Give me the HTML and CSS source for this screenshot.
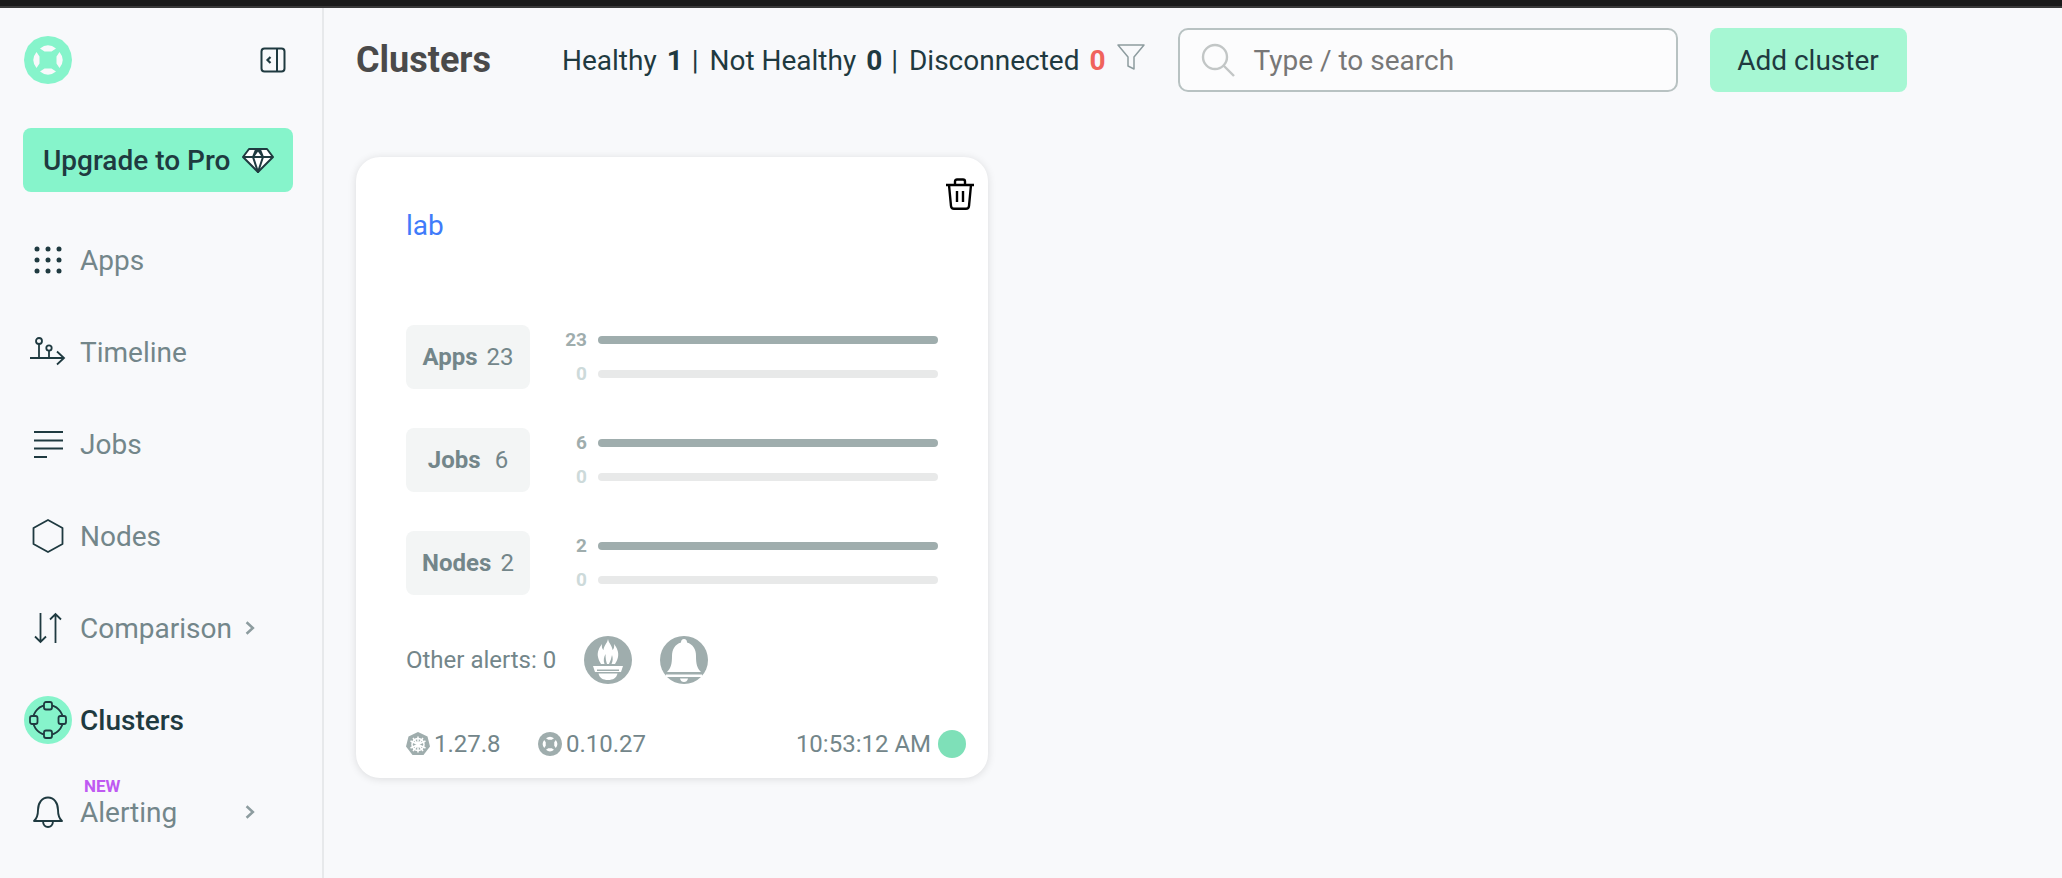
FILE: index.html
```html
<!DOCTYPE html>
<html lang="en">
<head>
  <meta charset="UTF-8">
  <title>Clusters</title>
  <link rel="stylesheet" href="styles.css">
</head>
<body>
  <div class="topbar"></div>
  <div class="layout">
    <aside class="sidebar">
      <div class="brand">
        <svg class="logo" viewBox="0 0 48 48"><path fill-rule="evenodd" fill="#86f4cb" d="M17 1L24 0L31 1L38 4L44 10L47 17L48 24L47 31L44 38L38 44L31 47L24 48L17 47L10 44L4 38L1 31L0 24L1 17L4 10L10 4ZM16 12.500Q24 6 32 12.500L27.500 15.500H20.500ZM35.500 16Q42 24 35.500 32L32.500 27.500V20.500ZM32 35.500Q24 42 16 35.500L20.500 32.500H27.500ZM12.500 32Q6 24 12.500 16L15.500 20.500V27.500Z"/></svg>
        <svg class="collapse" viewBox="0 0 26 26" fill="none" stroke="#1f3a40" stroke-width="2"><rect x="1.500" y="1.500" width="23" height="23" rx="3"/><path d="M17 1.500V24.500"/><path d="M10.500 10L7.500 13L10.500 16" stroke-width="2.200"/></svg>
      </div>
      <a class="upgrade" href="#">Upgrade to Pro
        <svg viewBox="0 0 32 26" fill="#fff" stroke="#1f3a40" stroke-width="2" stroke-linejoin="round"><path d="M7 2H25L31 10L16 25L1 10Z"/><path d="M1 10H31M11 10L16 25L21 10M11 10L14 2.500M21 10L18 2.500M11 10L16 3L21 10" fill="none"/></svg>
      </a>
      <nav class="menu">
        <a class="menu-item" href="#">
          <span class="menu-icon"><svg viewBox="0 0 28 28" fill="#1f3a40"><circle cx="3" cy="3" r="2.500"/><circle cx="14" cy="3" r="2.500"/><circle cx="25" cy="3" r="2.500"/><circle cx="3" cy="14" r="2.500"/><circle cx="14" cy="14" r="2.500"/><circle cx="25" cy="14" r="2.500"/><circle cx="3" cy="25" r="2.500"/><circle cx="14" cy="25" r="2.500"/><circle cx="25" cy="25" r="2.500"/></svg></span>
          Apps
        </a>
        <a class="menu-item" href="#">
          <span class="menu-icon"><svg viewBox="0 0 36 30" fill="none" stroke="#1f3a40" stroke-width="1.800"><path d="M0 21H34M27 14.500L34 21L27 27.500"/><circle cx="9" cy="4" r="3"/><path d="M9 7V21"/><circle cx="19" cy="11" r="2.700"/><path d="M19 14V21"/></svg></span>
          Timeline
        </a>
        <a class="menu-item" href="#">
          <span class="menu-icon"><svg viewBox="0 0 30 28" fill="none" stroke="#1f3a40" stroke-width="2"><path d="M1 2H30M1 10.500H30M1 18.500H30M1 27H14"/></svg></span>
          Jobs
        </a>
        <a class="menu-item" href="#">
          <span class="menu-icon"><svg viewBox="0 0 32 34" fill="none" stroke="#1f3a40" stroke-width="1.800" stroke-linejoin="round"><path d="M16 1L30.500 9V25L16 33L1.500 25V9Z"/></svg></span>
          Nodes
        </a>
        <a class="menu-item" href="#">
          <span class="menu-icon"><svg viewBox="0 0 28 32" fill="none" stroke="#1f3a40" stroke-width="1.800"><path d="M6.500 1V30M1 24.500L6.500 30L12 24.500M21.500 31V2M16 7.500L21.500 2L27 7.500"/></svg></span>
          Comparison
          <svg class="chevron" viewBox="0 0 10 14" fill="none" stroke="#8d9c9f" stroke-width="2.200"><path d="M2 2L7.500 7L2 12"/></svg>
        </a>
        <a class="menu-item active" href="#">
          <span class="menu-icon"><svg viewBox="0 0 38 38" fill="#86f4cb" stroke="#1f3a40" stroke-width="1.800"><circle cx="19" cy="19" r="15" fill="none"/><rect x="15" y="1" width="8" height="7.500" rx="2"/><rect x="15" y="29.500" width="8" height="7.500" rx="2"/><rect x="1" y="15" width="7.500" height="8" rx="2"/><rect x="29.500" y="15" width="7.500" height="8" rx="2"/></svg></span>
          Clusters
        </a>
        <a class="menu-item" href="#">
          <span class="menu-icon"><svg viewBox="0 0 30 32" fill="none" stroke="#1f3a40" stroke-width="1.900" stroke-linejoin="round"><path d="M1 25H29C25.500 22 25 19 25 14C25 7 21 1.500 15 1.500C9 1.500 5 7 5 14C5 19 4.500 22 1 25Z"/><path d="M10 25C10 33 20 33 20 25"/></svg></span>
          <span class="new-label">Alerting<span class="new-tag">NEW</span></span>
          <svg class="chevron chevron-alert" viewBox="0 0 10 14" fill="none" stroke="#8d9c9f" stroke-width="2.200"><path d="M2 2L7.500 7L2 12"/></svg>
        </a>
      </nav>
    </aside>

    <main class="content">
      <header class="page-head">
        <h1>Clusters</h1>
        <div class="summary">
          Healthy <b>1</b> <i>|</i> Not Healthy <b>0</b> <i>|</i> Disconnected <b class="red">0</b>
        </div>
        <svg class="filter" viewBox="0 0 28 26" fill="none" stroke="#8d9c9f" stroke-width="1.500" stroke-linejoin="round"><path d="M1 1H27L17 13V25L11 22V13Z"/></svg>
        <div class="search">
          <svg viewBox="0 0 34 34" fill="none" stroke="#c2c6c6" stroke-width="2.400"><circle cx="14" cy="14" r="12"/><path d="M22.500 22.500L33 33"/></svg>
          <span>Type / to search</span>
        </div>
        <button class="add-btn" type="button">Add cluster</button>
      </header>

      <section class="card">
        <svg class="trash" viewBox="0 0 30 32" fill="none" stroke="#000" stroke-width="2.400" stroke-linejoin="round"><path d="M1 7H29M10 7V3.500C10 2 11 1.500 12 1.500H18C19 1.500 20 2 20 3.500V7M4 7L6 28C6.200 30 7 30.800 9 30.800H21C23 30.800 23.800 30 24 28L26 7M12 13V24M18 13V24"/></svg>
        <a class="card-name" href="#">lab</a>

        <div class="stat">
          <div class="stat-box"><b>Apps</b> 23</div>
          <div class="stat-bars">
            <div class="bar-row"><span>23</span><div class="bar"></div></div>
            <div class="bar-row empty"><span>0</span><div class="bar"></div></div>
          </div>
        </div>
        <div class="stat">
          <div class="stat-box stat-box-wide"><b>Jobs</b> 6</div>
          <div class="stat-bars">
            <div class="bar-row"><span>6</span><div class="bar"></div></div>
            <div class="bar-row empty"><span>0</span><div class="bar"></div></div>
          </div>
        </div>
        <div class="stat">
          <div class="stat-box"><b>Nodes</b> 2</div>
          <div class="stat-bars">
            <div class="bar-row"><span>2</span><div class="bar"></div></div>
            <div class="bar-row empty"><span>0</span><div class="bar"></div></div>
          </div>
        </div>

        <div class="alerts">
          <span>Other alerts: 0</span>
          <svg viewBox="0 0 48 48"><circle cx="24" cy="24" r="24" fill="#9fadad"/><path fill="#fff" d="M24 3C25 8 28 9 28.500 14C30 13 30.500 10 30 8C33 12 35 16 34 21C33.500 24 32 26 31 28H17C16 26 14.500 24 14 21C13 16 15 12 18 8C17.500 10 18 13 19.500 14C20 9 23 8 24 3Z"/><path fill="#9fadad" d="M20.500 28C19 24 20 21 21.500 18C21.500 22 22 25 23 28ZM27.500 28C29 25 29 22 28 19C27.500 22 26.500 25 25 28Z"/><path fill="#fff" d="M9 30H39L37 36H11ZM14.500 37.500H33.500C32.500 42 29 44 24 44C19 44 15.500 42 14.500 37.500Z"/><path fill="#9fadad" d="M13 33.500H35V35H13Z"/></svg>
          <svg viewBox="0 0 48 48"><circle cx="24" cy="24" r="24" fill="#9fadad"/><path fill="#fff" d="M24 3C26 3 27 4.500 27 6.500C33 8.500 36 13 36 20C36 28 37 32 41 36H7C11 32 12 28 12 20C12 13 15 8.500 21 6.500C21 4.500 22 3 24 3ZM6 38.500H42V41H6ZM20 42.500H28C27.500 45 26 46 24 46C22 46 20.500 45 20 42.500Z"/></svg>
        </div>

        <div class="card-foot">
          <span class="version">
            <svg viewBox="0 0 24 24"><path fill="#9fadad" d="M12 0L21.500 4.500L24 14.500L17.500 23H6.500L0 14.500L2.500 4.500Z"/><g fill="none" stroke="#fff" stroke-width="1.500"><circle cx="12" cy="12.500" r="6"/><path d="M12 4.500V20.500M4.500 9L19.500 16M19.500 9L4.500 16M7 19L17 6M17 19L7 6"/></g></svg>
            1.27.8
          </span>
          <span class="version">
            <svg viewBox="0 0 48 48"><path fill-rule="evenodd" fill="#9fadad" d="M17 1L24 0L31 1L38 4L44 10L47 17L48 24L47 31L44 38L38 44L31 47L24 48L17 47L10 44L4 38L1 31L0 24L1 17L4 10L10 4ZM16 12.500Q24 6 32 12.500L27.500 15.500H20.500ZM35.500 16Q42 24 35.500 32L32.500 27.500V20.500ZM32 35.500Q24 42 16 35.500L20.500 32.500H27.500ZM12.500 32Q6 24 12.500 16L15.500 20.500V27.500Z"/></svg>
            0.10.27
          </span>
          <span class="time">10:53:12 AM</span>
          <span class="dot"></span>
        </div>
      </section>
    </main>
  </div>
</body>
</html>
```

FILE: styles.css
```css
* {
  box-sizing: border-box;
  margin: 0;
  padding: 0;
  font-family: 'Roboto', sans-serif;
}
body {
  background: #f8f9fb;
  height: 878px;
  overflow: hidden;
  color: #1f3a40;
}
a {
  text-decoration: none;
  color: inherit;
}
.topbar {
  height: 8px;
  background: #1b1b1b;
  border-bottom: 2px solid #3a3a3a;
}
.layout {
  display: flex;
  height: 870px;
}
.sidebar {
  width: 324px;
  flex-shrink: 0;
  border-right: 2px solid #e7e9eb;
  padding: 28px 0 0 23px;
}
.brand {
  display: flex;
  align-items: center;
  justify-content: space-between;
  width: 263px;
  padding-left: 1px;
  height: 48px;
}
.logo {
  width: 48px;
  height: 48px;
}
.collapse {
  width: 26px;
  height: 26px;
}
.upgrade {
  display: flex;
  align-items: center;
  gap: 12px;
  width: 270px;
  height: 64px;
  margin-top: 44px;
  padding-left: 20px;
  background: #86f4cb;
  border-radius: 8px;
  font-size: 28px;
  font-weight: 500;
}
.upgrade svg {
  width: 32px;
  height: 26px;
}
.menu {
  display: flex;
  flex-direction: column;
  margin-top: 22px;
}
.menu-item {
  display: flex;
  align-items: center;
  height: 92px;
  font-size: 28px;
  color: #73868a;
}
.menu-icon {
  width: 56px;
  height: 48px;
  flex-shrink: 0;
  margin-left: 1px;
  display: flex;
  align-items: center;
}
.menu-item:nth-child(1) .menu-icon svg { width: 28px; height: 28px; margin-left: 10px; }
.menu-item:nth-child(2) .menu-icon svg { width: 36px; height: 30px; margin-left: 6px; }
.menu-item:nth-child(3) .menu-icon svg { width: 30px; height: 28px; margin-left: 9px; }
.menu-item:nth-child(4) .menu-icon svg { width: 32px; height: 34px; margin-left: 8px; }
.menu-item:nth-child(5) .menu-icon svg { width: 28px; height: 32px; margin-left: 10px; }
.menu-item:nth-child(7) .menu-icon svg { width: 30px; height: 32px; margin-left: 9px; }
.menu-item.active {
  color: #1f3a40;
  font-weight: 500;
}
.menu-item.active .menu-icon {
  width: 48px;
  margin-right: 8px;
  justify-content: center;
  background: #86f4cb;
  border-radius: 50%;
}
.menu-item.active .menu-icon svg {
  width: 38px;
  height: 38px;
}
.chevron {
  width: 12px;
  height: 16px;
  margin-left: 12px;
}
.chevron-alert {
  margin-left: 67px;
}
.new-label {
  position: relative;
}
.new-tag {
  position: absolute;
  left: 4px;
  top: -20px;
  font-size: 17px;
  font-weight: 700;
  color: #bf5af2;
}
.content {
  flex: 1;
  padding: 20px 0 0 32px;
}
.page-head {
  display: flex;
  align-items: center;
  height: 64px;
}
h1 {
  width: 206px;
  font-size: 36px;
  font-weight: 700;
  color: #4a4a4a;
}
.summary {
  font-size: 28px;
}
.summary b {
  font-weight: 700;
  margin: 0 3px;
}
.summary i {
  font-style: normal;
  margin: 0 4px 0 -1px;
}
.summary .red {
  color: #f0635c;
}
.filter {
  width: 28px;
  height: 26px;
  margin: -6px 0 0 8px;
}
.search {
  display: flex;
  align-items: center;
  gap: 19px;
  width: 500px;
  height: 64px;
  margin-left: 33px;
  padding-left: 21px;
  background: #fcfcfd;
  border: 2px solid #b8c2c2;
  border-radius: 10px;
  font-size: 28px;
  color: #777;
}
.search svg {
  width: 34px;
  height: 34px;
}
.add-btn {
  width: 197px;
  height: 64px;
  margin-left: 32px;
  background: #a6f7d3;
  color: #1f3a40;
  border: none;
  border-radius: 8px;
  font-size: 28px;
}
.card {
  position: relative;
  width: 632px;
  height: 621px;
  margin-top: 65px;
  padding: 0 50px;
  background: #fff;
  border-radius: 24px;
  box-shadow: 0 1px 8px rgba(0,0,0,0.12);
}
.trash {
  position: absolute;
  top: 21px;
  right: 13px;
  width: 30px;
  height: 32px;
}
.card-name {
  display: block;
  height: 168px;
  padding-top: 51px;
  font-size: 28px;
  line-height: 36px;
  color: #3f7bfa;
}
.stat {
  display: flex;
  align-items: center;
  height: 64px;
  margin-bottom: 39px;
}
.stat-box {
  display: flex;
  align-items: center;
  justify-content: center;
  gap: 9px;
  width: 124px;
  height: 64px;
  background: #f3f5f5;
  border-radius: 8px;
  font-size: 24px;
  color: #73868a;
}
.stat-box-wide {
  gap: 14px;
}
.stat-bars {
  flex: 1;
  display: flex;
  flex-direction: column;
  gap: 14px;
  margin-top: -1px;
}
.bar-row {
  display: flex;
  align-items: center;
  gap: 11px;
  height: 20px;
  font-size: 19px;
  font-weight: 700;
  color: #9fadad;
}
.bar-row span {
  width: 57px;
  text-align: right;
}
.bar {
  flex: 1;
  height: 8px;
  background: #9fadad;
  border-radius: 4px;
}
.empty {
  color: #cddada;
}
.empty .bar {
  background: #e8e9e9;
}
.alerts {
  display: flex;
  align-items: center;
  height: 48px;
  margin-top: 41px;
  font-size: 24px;
  color: #73868a;
}
.alerts span {
  width: 178px;
}
.alerts svg {
  width: 48px;
  height: 48px;
  margin-right: 28px;
}
.card-foot {
  display: flex;
  align-items: center;
  height: 28px;
  margin: 46px -28px 0 0;
  font-size: 24px;
  color: #73868a;
}
.version {
  display: flex;
  align-items: center;
  gap: 4px;
  width: 132px;
}
.version svg {
  width: 24px;
  height: 24px;
}
.time {
  margin-left: auto;
}
.dot {
  width: 28px;
  height: 28px;
  margin-left: 7px;
  background: #7ee0b8;
  border-radius: 50%;
}
```
